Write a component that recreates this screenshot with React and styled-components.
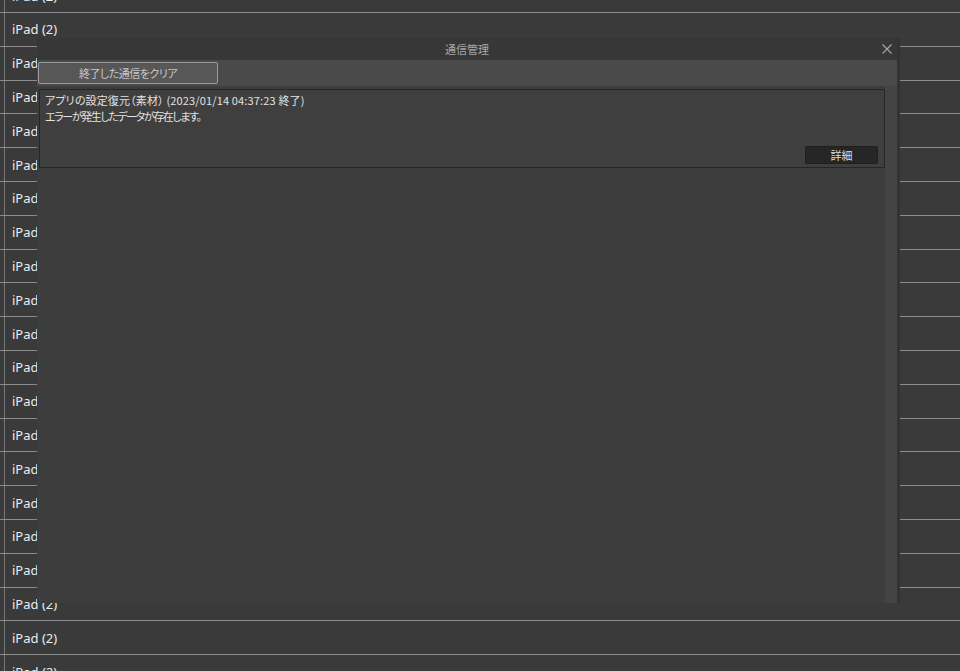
import React from "react";
import styled, { createGlobalStyle } from "styled-components";

const GlobalStyle = createGlobalStyle`
  html, body { margin: 0; padding: 0; background: #3a3a3a; overflow: hidden; }
  * { box-sizing: border-box; }
`;

const Page = styled.div`
  position: relative;
  width: 960px;
  height: 671px;
  overflow: hidden;
  background: #3a3a3a;
  font-family: "Noto Sans", "Noto Sans CJK JP", sans-serif;
`;

const List = styled.div`
  margin-top: -20.8px;
  background-image: linear-gradient(#767676, #767676);
  background-size: 1px 100%;
  background-position: 4px 0;
  background-repeat: no-repeat;
`;

const Row = styled.div`
  height: 33.8px;
  display: flex;
  align-items: center;
  padding-left: 12px;
  border-bottom: 1px solid #8c8c8c;
  color: #ececec;
  font-size: 13px;
`;

const Dialog = styled.div`
  position: absolute;
  left: 37px;
  top: 38px;
  width: 860px;
  height: 565px;
  display: flex;
  flex-direction: column;
  background: #3d3d3d;
  font-family: "Noto Sans CJK JP", "Noto Sans", sans-serif;
  box-shadow: 3px 0 0 #333;
`;

const TitleBar = styled.div`
  position: relative;
  height: 22px;
  display: flex;
  align-items: center;
  justify-content: center;
  background: #373737;
  color: #a8a8a8;
  font-size: 11px;
  font-feature-settings: "palt";
`;

const CloseButton = styled.div`
  position: absolute;
  right: 5px;
  top: 6px;
  width: 10px;
  height: 10px;
  display: flex;
`;

const Toolbar = styled.div`
  height: 26px;
  display: flex;
  align-items: flex-start;
  padding: 2px 1px;
  background: #4a4a4a;
`;

const ClearButton = styled.div`
  width: 180px;
  height: 22px;
  display: flex;
  align-items: center;
  justify-content: center;
  background: #575757;
  border: 1px solid #9a9a9a;
  border-radius: 2px;
  color: #c8c8c8;
  font-size: 11px;
  font-feature-settings: "palt";
  letter-spacing: -0.5px;
`;

const Body = styled.div`
  flex: 1;
  display: flex;
`;

const Content = styled.div`
  flex: 1;
  padding: 3px 0 0 2px;
`;

const ScrollColumn = styled.div`
  width: 12px;
  background: #444444;
`;

const Card = styled.div`
  height: 79px;
  display: flex;
  flex-direction: column;
  padding: 2px 6px 3px 5px;
  border: 1px solid #262626;
  background: #3f3f3f;
`;

const Line = styled.div`
  color: #e2e2e2;
  font-size: 11px;
  line-height: 16px;
  white-space: nowrap;
  font-feature-settings: "palt";
  letter-spacing: ${(p) => (p.$tight ? "-1.4px" : "0.15px")};
`;

const CardFooter = styled.div`
  margin-top: auto;
  display: flex;
  justify-content: flex-end;
`;

const DetailButton = styled.div`
  width: 73px;
  height: 18px;
  display: flex;
  align-items: center;
  justify-content: center;
  background: #262626;
  border: 1px solid #1f1f1f;
  border-radius: 2px;
  color: #dcdcdc;
  font-size: 11px;
`;

export default function App() {
  const rows = Array.from({ length: 21 });
  return (
    <Page>
      <GlobalStyle />
      <List>
        {rows.map((_, i) => (
          <Row key={i}>iPad (2)</Row>
        ))}
      </List>
      <Dialog>
        <TitleBar>
          通信管理
          <CloseButton>
            <svg width="10" height="10" viewBox="0 0 10 10">
              <path d="M0.5 0.5 L9.5 9.5 M9.5 0.5 L0.5 9.5" stroke="#a8a8a8" strokeWidth="1.1" />
            </svg>
          </CloseButton>
        </TitleBar>
        <Toolbar>
          <ClearButton>終了した通信をクリア</ClearButton>
        </Toolbar>
        <Body>
          <Content>
            <Card>
              <Line>アプリの設定復元（素材） (2023/01/14 04:37:23 終了)</Line>
              <Line $tight>エラーが発生したデータが存在します。</Line>
              <CardFooter>
                <DetailButton>詳細</DetailButton>
              </CardFooter>
            </Card>
          </Content>
          <ScrollColumn />
        </Body>
      </Dialog>
    </Page>
  );
}
